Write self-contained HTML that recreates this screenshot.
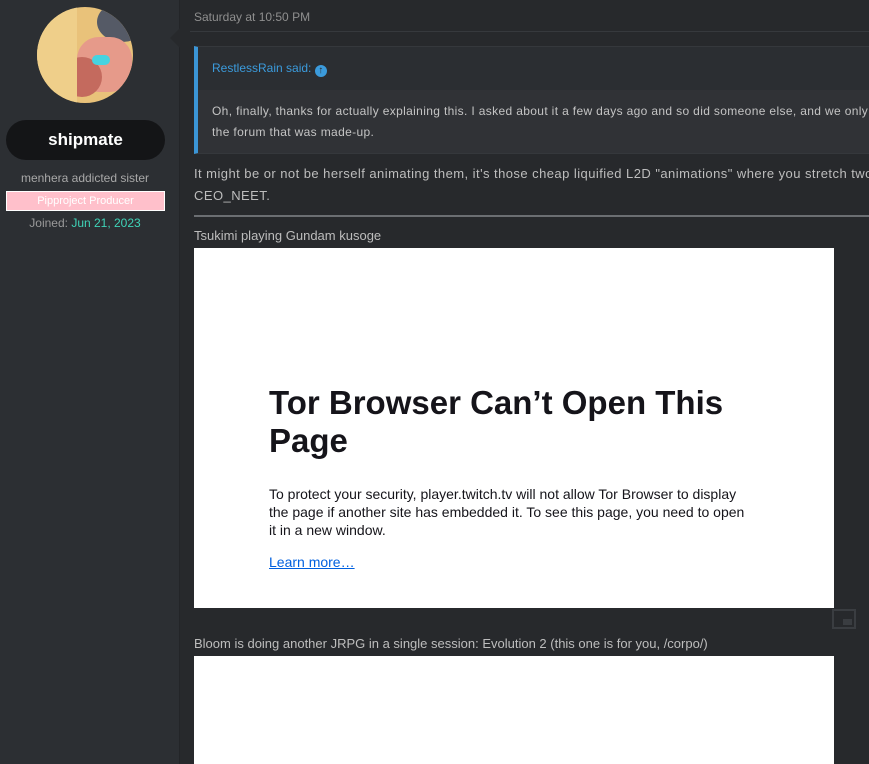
<!DOCTYPE html>
<html><head><style>
body{margin:0;width:869px;height:764px;overflow:hidden;background:#27292c;font-family:"Liberation Sans",sans-serif;position:relative}
.side{position:absolute;left:0;top:0;width:179px;height:764px;background:#2c2f33;border-right:1px solid #232528}
.av{position:absolute;left:37px;top:7px;width:96px;height:96px;border-radius:50%;overflow:hidden;background:#e9c27a}
.name{position:absolute;left:6px;top:120px;width:159px;height:40px;border-radius:20px;background:#141517;color:#fff;font-weight:bold;font-size:17px;text-align:center;line-height:40px}
.t{position:absolute;font-size:12px}
.badge{position:absolute;left:6px;top:191px;width:157px;height:18px;background:#ffc0cb;border:1px solid #fff;color:#fff;font-size:11px;text-align:center;line-height:18px}
.arrow{position:absolute;left:170px;top:28px;width:0;height:0;border-top:10px solid transparent;border-bottom:10px solid transparent;border-right:10px solid #27292c}
.m{position:absolute;color:#bdbdbd;font-size:13px}
</style></head><body>
<div class="side">
<div class="av">
<div style="position:absolute;left:60px;top:-5px;width:50px;height:40px;background:#555a66;border-radius:50%"></div>
<div style="position:absolute;left:40px;top:30px;width:55px;height:55px;background:#e69a8a;border-radius:40%"></div>
<div style="position:absolute;left:25px;top:50px;width:40px;height:40px;background:#c46a5e;border-radius:50%"></div>
<div style="position:absolute;left:55px;top:48px;width:18px;height:10px;background:#47d3e0;border-radius:5px"></div>
<div style="position:absolute;left:0;top:0;width:40px;height:96px;background:#efcf8a"></div>
</div>
<div class="name">shipmate</div>
<div class="t" style="left:0;width:170px;text-align:center;top:171px;color:#a8a8a8">menhera addicted sister</div>
<div class="badge">Pipproject Producer</div>
<div class="t" style="left:0;width:170px;text-align:center;top:216px;color:#9a9a9a">Joined: <span style="color:#3fd4b8">Jun 21, 2023</span></div>
</div>
<div class="arrow"></div>
<div class="m" style="left:194px;top:10px;font-size:12px;color:#8f8f8f">Saturday at 10:50 PM</div>
<div style="position:absolute;left:190px;top:31px;width:679px;height:1px;background:#36393d"></div>
<div style="position:absolute;left:194px;top:46px;width:675px;height:108px;background:#2b2e32;border-left:4px solid #3b95d6;border-top:1px solid #35383c;border-bottom:1px solid #35383c;box-sizing:border-box">
<div style="position:absolute;left:14px;top:14px;font-size:12px;color:#3b9bdc">RestlessRain said: <span style="display:inline-block;width:12px;height:12px;border-radius:50%;background:#3b9bdc;color:#2b2e32;font-size:10px;text-align:center;line-height:12px;font-weight:bold;vertical-align:-1px">↑</span></div>
<div style="position:absolute;left:0;top:43px;width:675px;height:63px;background:#303236"></div>
<div style="position:absolute;left:14px;top:54px;font-size:12px;letter-spacing:0.35px;color:#c4c4c4;line-height:21px;white-space:nowrap">Oh, finally, thanks for actually explaining this. I asked about it a few days ago and so did someone else, and we only<br>the forum that was made-up.</div>
</div>
<div class="m" style="left:194px;top:163px;line-height:22px;white-space:nowrap;letter-spacing:0.45px">It might be or not be herself animating them, it's those cheap liquified L2D "animations" where you stretch two<br>CEO_NEET.</div>
<div style="position:absolute;left:194px;top:215px;width:675px;height:2px;background:#6b6e72"></div>
<div class="m" style="left:194px;top:228px">Tsukimi playing Gundam kusoge</div>
<div style="position:absolute;left:194px;top:248px;width:640px;height:360px;background:#fff">
<div style="position:absolute;left:75px;top:136px;width:480px;font-size:33px;font-weight:bold;color:#15141a;line-height:38px">Tor Browser Can’t Open This Page</div>
<div style="position:absolute;left:75px;top:237px;width:478px;font-size:14px;color:#15141a;line-height:18px">To protect your security, player.twitch.tv will not allow Tor Browser to display the page if another site has embedded it. To see this page, you need to open it in a new window.</div>
<div style="position:absolute;left:75px;top:306px;font-size:14px;color:#0060df;text-decoration:underline">Learn more…</div>
</div>
<div style="position:absolute;left:832px;top:609px;width:24px;height:20px;border:2px solid #3a3d41;box-sizing:border-box"><div style="position:absolute;right:2px;bottom:2px;width:9px;height:6px;background:#3a3d41"></div></div>
<div class="m" style="left:194px;top:636px">Bloom is doing another JRPG in a single session: Evolution 2 (this one is for you, /corpo/)</div>
<div style="position:absolute;left:194px;top:656px;width:640px;height:108px;background:#fff"></div>
</body></html>
